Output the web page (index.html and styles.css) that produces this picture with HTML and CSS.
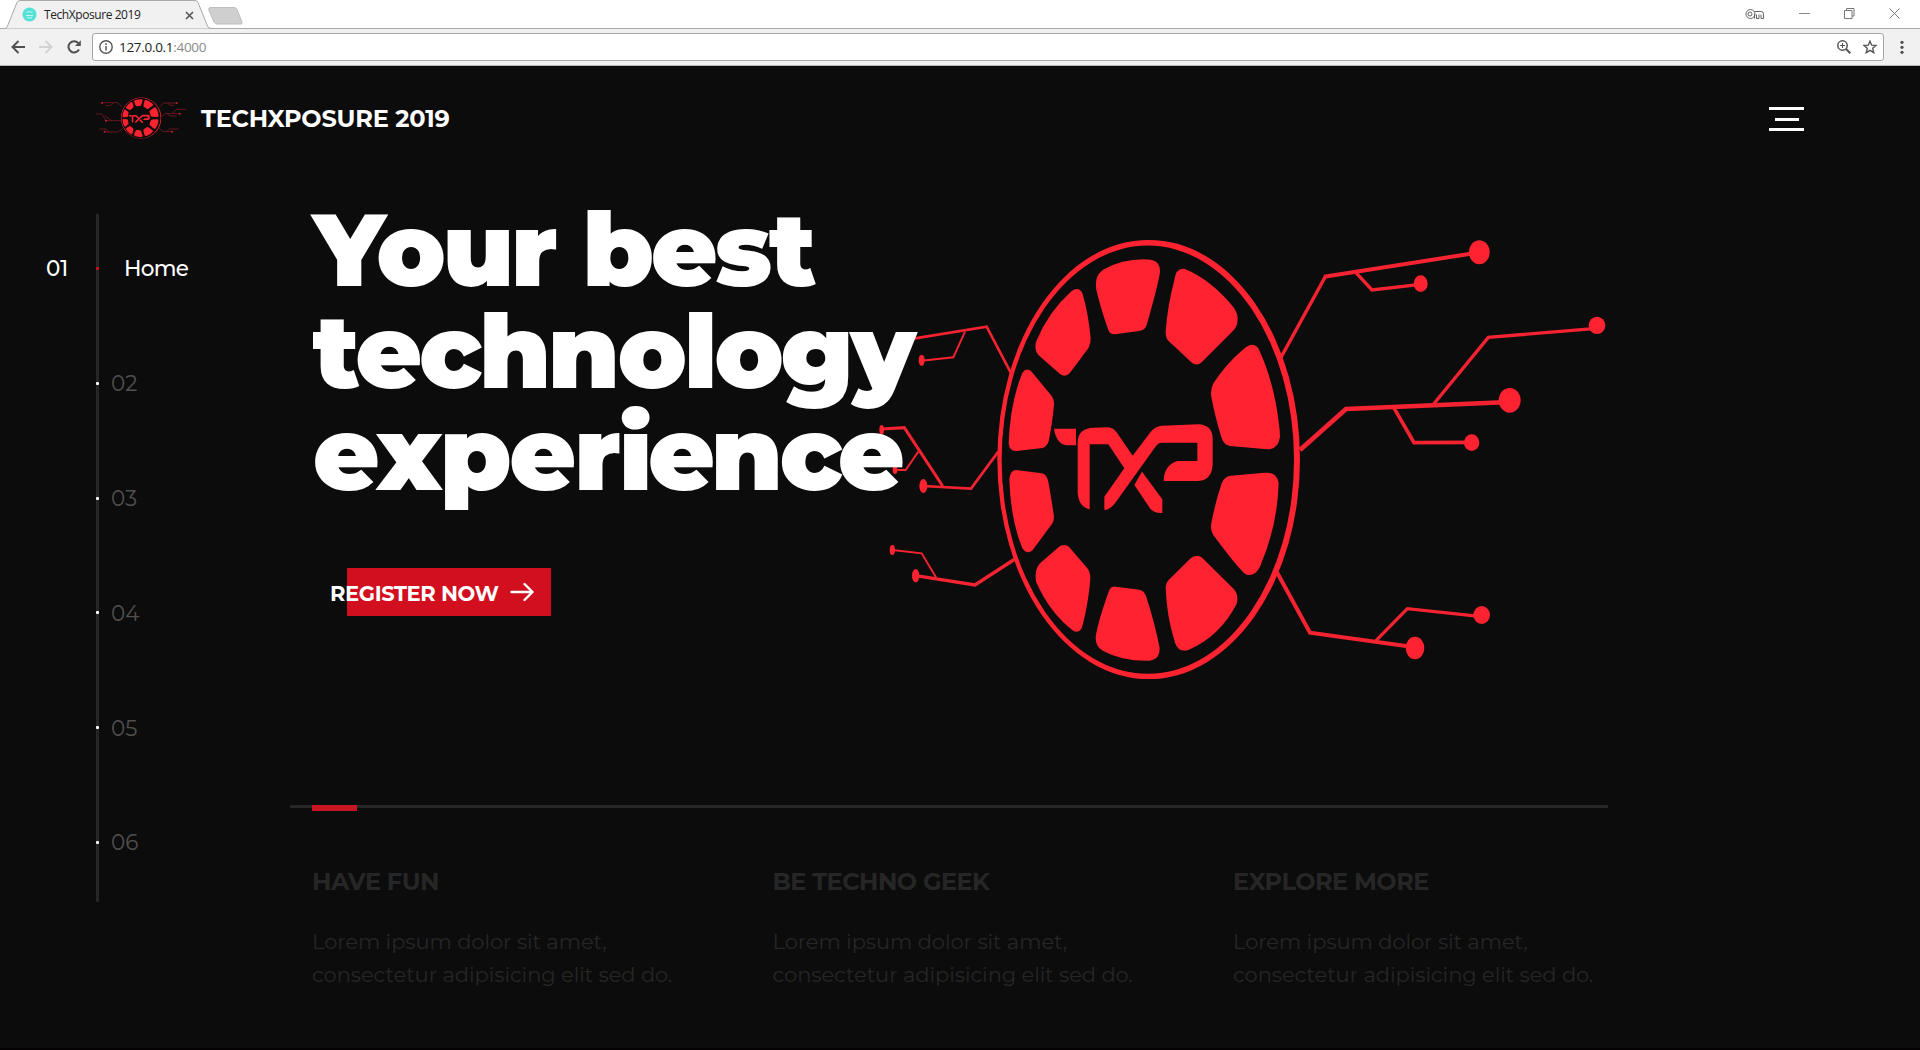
FILE: index.html
```html
<!DOCTYPE html>
<html lang="en">
<head>
<meta charset="utf-8">
<title>TechXposure 2019</title>
<link rel="stylesheet" href="styles.css">
</head>
<body>
<div class="tabstrip">
  <div class="tab">
    <svg class="tab-shape" width="208" height="29" viewBox="0 0 208 29"><path d="M0 28.500H1Q2.500 28.500 3.500 26L13 2.500Q14 .5 16 .5H191Q193 .5 194 2.500L203.500 26Q204.500 28.500 207 28.500" fill="#f1f1f1" stroke="#a9a9a9"/></svg>
    <svg class="favicon" width="15" height="15" viewBox="0 0 15 15"><circle cx="7.500" cy="7.500" r="7" fill="#55e0d8"/><path d="M4 8.500H11M4.500 5.500q3-2 6 0M5 10.500q2.500 1.200 5 0" fill="none" stroke="#c5f7f3"/></svg>
    <span class="tab-title">TechXposure 2019</span>
    <svg class="tab-close" width="9" height="9" viewBox="0 0 9 9"><path d="M1 1l7 7M8 1L1 8" stroke="#555" stroke-width="1.600"/></svg>
  </div>
  <svg class="new-tab" width="35" height="18" viewBox="0 0 35 18"><path d="M2 .5H26Q28 .5 29 2.500L34 15Q34.500 17 33 17H9Q7 17 6 15L.8 3Q.3 .8 2 .5Z" fill="#cfcfcf" stroke="#bdbdbd"/></svg>
  <div class="window-controls">
    <svg width="20" height="12" viewBox="0 0 20 12" fill="none" stroke="#666"><circle cx="5.500" cy="6" r="4.500"/><circle cx="5" cy="6" r="2"/><path d="M9.500 3.500H16Q18.500 3.500 18.500 6V10.500H16V6.500M14 6.500V10.500H11.500V6.500M9.500 10.500V6"/></svg>
    <svg width="11" height="11" viewBox="0 0 11 11"><path d="M0 5.500H11" stroke="#888"/></svg>
    <svg width="11" height="11" viewBox="0 0 11 11" fill="none" stroke="#777"><path d="M.5 2.500H8V10.500H.5ZM2.500 2.500V.5H10V8H8"/></svg>
    <svg width="11" height="11" viewBox="0 0 11 11"><path d="M.5 .5l10 10M10.500 .5l-10 10" stroke="#777"/></svg>
  </div>
</div>
<div class="toolbar">
  <svg width="14" height="14" viewBox="0 0 14 14" fill="none" stroke="#505050" stroke-width="2"><path d="M14 7H1.500M7.500 1L1.500 7l6 6"/></svg>
  <svg width="14" height="14" viewBox="0 0 14 14" fill="none" stroke="#d2d2d2" stroke-width="2"><path d="M0 7H12.500M6.500 1l6 6-6 6"/></svg>
  <svg width="14" height="14" viewBox="0 0 14 14"><path d="M12 9.500A5.600 5.600 0 1 1 11.300 3.200" fill="none" stroke="#505050" stroke-width="2"/><path d="M13.800 .3V6H8Z" fill="#505050"/></svg>
  <div class="omnibox">
    <svg width="14" height="14" viewBox="0 0 14 14"><circle cx="7" cy="7" r="6.200" fill="none" stroke="#555" stroke-width="1.400"/><path d="M7 6V10.500M7 3.300V4.900" stroke="#555" stroke-width="1.500"/></svg>
    <span class="url">127.0.0.1<span class="port">:4000</span></span>
    <svg class="zoom-icon" width="14" height="14" viewBox="0 0 14 14" fill="none" stroke="#555"><circle cx="5.500" cy="5.500" r="4.700" stroke-width="1.500"/><path d="M9 9l4.300 4.300" stroke-width="2"/><path d="M3 5.500H8M5.500 3V8"/></svg>
    <svg width="14" height="14" viewBox="0 0 14 14"><path d="M7 1.200L8.700 5.200 13 5.500 9.700 8.300 10.800 12.700 7 10.300 3.200 12.700 4.300 8.300 1 5.500 5.300 5.200Z" fill="none" stroke="#555" stroke-width="1.400"/></svg>
  </div>
  <svg width="4" height="14" viewBox="0 0 4 14" fill="#505050"><circle cx="2" cy="2.300" r="1.600"/><circle cx="2" cy="7.300" r="1.600"/><circle cx="2" cy="12.300" r="1.600"/></svg>
</div>

<div class="page">
  <header class="site-header">
    <svg class="logo" width="92" height="44" viewBox="48 50 276 132">
      <g fill="none" stroke="#8d1c27" stroke-width="2"><path d="M125 82L114 70H66M100 70L92 79H76M123 124H78L66 104H48M95 124L74 109M128 148L112 158H74M88 158L78 149H58M240 82L250 71H290M262 71L270 78H282M243 112L256 103H300M276 103L290 90H320M262 103L270 110H290M236 146L250 157H276M260 157L268 149H296"/></g>
      <g fill="#c02331"><circle cx="66" cy="71" r="3"/><circle cx="78" cy="124" r="3"/><circle cx="74" cy="157" r="3"/><circle cx="290" cy="71" r="3"/><circle cx="299" cy="103" r="3"/><circle cx="276" cy="157" r="3"/></g>
      <svg x="123" y="54" width="121" height="124" viewBox="52 60 908 1317" preserveAspectRatio="none"><use href="#wheel"/></svg>
    </svg>
    <span class="brand">TECHXPOSURE 2019</span>
    <div class="menu"><i></i><i class="short"></i><i></i></div>
  </header>

  <div class="columns">
    <nav class="side-nav">
      <ul>
        <li class="active"><span class="num">01</span><i class="dot"></i><span class="label">Home</span></li>
        <li><span class="num"></span><i class="dot"></i><span class="label">02</span></li>
        <li><span class="num"></span><i class="dot"></i><span class="label">03</span></li>
        <li><span class="num"></span><i class="dot"></i><span class="label">04</span></li>
        <li><span class="num"></span><i class="dot"></i><span class="label">05</span></li>
        <li><span class="num"></span><i class="dot"></i><span class="label">06</span></li>
      </ul>
    </nav>

    <main>
      <section class="hero">
        <svg class="hero-art" width="735" height="480" viewBox="-315 0 2205 1440" fill="#ff2230">
          <g id="wheel" fill="#ff2230">
            <path fill-rule="evenodd" d="M52 718.500a454 658.500 0 1 0 908 0a454 658.500 0 1 0-908 0ZM65 719a438.500 642 0 1 1 877 0a438.500 642 0 1 1-877 0Z"/>
            <path d="M349 180Q352 160 372 148Q425 118 490 118L512 119Q541 122 540 155Q538 180 501 312Q497 330 477 333L405 343Q390 344 385 330Q365 275 349 210Q346 195 349 180Z"/>
            <path d="M583 180Q588 142 615 147Q690 178 755 255Q778 280 772 310Q770 322 755 337L665 427Q650 440 634 427L565 362Q556 352 557 335Q562 260 583 180Z"/>
            <path d="M700 490Q740 430 790 388Q818 362 835 385Q885 490 899 630L900 650Q895 688 862 688L750 678Q732 675 725 655Q705 590 694 530Q690 512 700 490Z"/>
            <path d="M725 790Q732 770 752 767L855 758Q893 756 896 790Q892 920 840 1040Q825 1070 800 1064Q785 1060 700 945Q690 930 694 910Q705 850 725 790Z"/>
            <path d="M557 1105Q556 1092 566 1080L632 1015Q648 1002 665 1012L762 1108Q776 1123 771 1150Q720 1250 625 1290Q595 1298 585 1268Q560 1190 557 1105Z"/>
            <path d="M388 1110Q394 1098 408 1100L478 1109Q492 1112 498 1128Q525 1210 539 1285Q540 1318 510 1322Q430 1325 368 1292Q345 1278 347 1250Q355 1200 388 1110Z"/>
            <path d="M180 1030L240 978Q256 970 268 982L322 1045Q332 1058 331 1078Q325 1150 308 1215Q303 1240 282 1234Q210 1180 168 1085Q162 1050 180 1030Z"/>
            <path d="M88 780Q90 750 108 750L185 760Q200 762 205 785Q215 840 222 890Q222 905 212 917L158 990Q142 1006 127 985Q92 900 88 780Z"/>
            <path d="M127 458Q140 440 155 455L215 528Q224 540 222 555Q218 600 207 660Q202 680 188 684L110 693Q88 695 86 670Q90 550 127 458Z"/>
            <path d="M168 365Q205 275 275 213Q298 198 308 222Q325 280 332 355Q333 370 325 385L270 458Q256 474 240 462L175 405Q162 390 168 365Z"/>
            <path d="M222 626H288V676H260Q228 670 222 626Z"/>
            <path d="M293 665Q295 625 340 623L385 622Q402 624 412 640L458 707L510 638Q524 619 545 617L655 613Q697 615 698 655V735Q695 780 655 783H551Q552 735 592 723H652V668H545Q535 668 528 678L405 850Q390 870 373 870V830L433 745L385 673H329V868Q297 862 293 820Z"/>
            <path d="M486 755L547 838V879Q520 880 510 865L463 795Z"/>
          </g>
          <g fill="none" stroke="#f52331" stroke-width="10">
            <path d="M903 412L1036 170"/><path d="M1032 170L1500 97" stroke-width="12"/>
            <path d="M1127 157L1176 210L1322 193"/>
            <path d="M1361 552L1525 352L1850 325"/>
            <path d="M960 690L1098 567L1590 546" stroke-width="14"/>
            <path d="M1241 562L1302 668L1475 667" stroke-width="11"/>
            <path d="M890 1055L990 1238L1305 1282" stroke-width="12"/>
            <path d="M1188 1262L1282 1166L1505 1190"/>
            <path d="M95 463L20 320L-195 355L-240 362" stroke-width="8"/>
            <path d="M-45 335L-80 412L-175 422" stroke-width="6"/>
            <path d="M55 695L-27 806L-170 798" stroke-width="8"/>
            <path d="M-112 798L-227 623L-295 627" stroke-width="9"/>
            <path d="M-185 695L-223 750L-255 750" stroke-width="6"/>
            <path d="M105 1017L-15 1095L-193 1067"/>
            <path d="M-132 1072L-175 1000L-263 990" stroke-width="6"/>
          </g>
          <ellipse cx="1498" cy="97" rx="31" ry="36"/><ellipse cx="1322" cy="191" rx="21" ry="25"/>
          <ellipse cx="1851" cy="316" rx="25" ry="26"/><ellipse cx="1589" cy="541" rx="33" ry="37"/>
          <ellipse cx="1475" cy="668" rx="23" ry="25"/><ellipse cx="1305" cy="1284" rx="28" ry="34"/>
          <ellipse cx="1505" cy="1185" rx="25" ry="27"/><ellipse cx="-175" cy="421" rx="9" ry="17"/>
          <ellipse cx="-170" cy="798" rx="12" ry="21"/><ellipse cx="-295" cy="629" rx="7" ry="14"/>
          <ellipse cx="-255" cy="750" rx="7" ry="12"/><ellipse cx="-193" cy="1067" rx="11" ry="20"/>
          <ellipse cx="-263" cy="990" rx="8" ry="15"/>
        </svg>
        <h1>Your best<br>technology<br><span class="loose">exper</span><span class="snug">ience</span></h1>
        <a class="register"><span>REGISTER NOW</span>
          <svg width="24" height="20" viewBox="0 0 24 20" fill="none" stroke="#fff" stroke-width="2.400" stroke-linecap="round" stroke-linejoin="round"><path d="M1.500 10H22.500M14.500 2L22.500 10l-8 8"/></svg>
        </a>
      </section>
      <section class="features">
        <div class="feature"><h3>HAVE FUN</h3><p>Lorem ipsum dolor sit amet,<br>consectetur adipisicing elit sed do.</p></div>
        <div class="feature"><h3>BE TECHNO GEEK</h3><p>Lorem ipsum dolor sit amet,<br>consectetur adipisicing elit sed do.</p></div>
        <div class="feature"><h3>EXPLORE MORE</h3><p>Lorem ipsum dolor sit amet,<br>consectetur adipisicing elit sed do.</p></div>
      </section>
    </main>
  </div>
</div>
</body>
</html>
```
FILE: styles.css
```css
* { box-sizing: border-box; }
body {
  margin: 0;
  height: 1050px;
  display: flex;
  flex-direction: column;
  overflow: hidden;
  background: #0c0c0c;
  font-family: Montserrat, Inter, sans-serif;
}
svg { display: block; flex: none; }

/* Browser frame */
.tabstrip {
  height: 29px;
  display: flex;
  background: #fff;
  border-bottom: 1px solid #a9a9a9;
  padding-left: 4px;
  font-family: "Segoe UI", "Open Sans", sans-serif;
}
.tab {
  position: relative;
  width: 208px;
  height: 29px;
  display: flex;
  align-items: flex-start;
}
.tab-shape { position: absolute; left: 0; top: 0; }
.favicon { position: relative; margin: 7px 0 0 18px; }
.tab-title {
  position: relative;
  margin: 6px 0 0 7px;
  width: 141px;
  font-size: 12px;
  line-height: 18px;
  letter-spacing: -0.43px;
  color: #222;
}
.tab-close { position: relative; margin-top: 11px; }
.new-tab { margin: 7px 0 0 -4px; }
.window-controls {
  margin-left: auto;
  padding-right: 20px;
  height: 27px;
  display: flex;
  align-items: center;
  gap: 34px;
}
.toolbar {
  height: 37px;
  flex: none;
  display: flex;
  align-items: center;
  gap: 14px;
  padding: 0 16px 1px 11px;
  background: #f1f1f1;
  border-bottom: 1px solid #b5b5b5;
}
.omnibox {
  flex: 1;
  height: 28px;
  margin: 0 2px 0 -3px;
  padding: 0 6px;
  display: flex;
  align-items: center;
  background: #fff;
  border: 1px solid #a6a6a6;
  border-radius: 3px;
}
.url {
  margin-left: 6px;
  font-family: "Segoe UI", "Open Sans", sans-serif;
  font-size: 13.500px;
  letter-spacing: -0.3px;
  color: #222;
}
.port { color: #8a8a8a; }
.zoom-icon { margin: 0 12px 0 auto; }

/* Page */
.page { flex: 1; border-bottom: 2px solid #050204; }
.site-header {
  height: 106px;
  display: flex;
  align-items: center;
  padding: 0 116px 0 96px;
}
.logo { margin-top: -2px; }
.brand {
  margin: -2px 0 0 13px;
  font-size: 24px;
  font-weight: 700;
  letter-spacing: -0.180px;
  color: #fff;
}
.menu {
  margin-left: auto;
  width: 35px;
  height: 24px;
  display: flex;
  flex-direction: column;
  justify-content: space-between;
}
.menu i { height: 3px; background: #fff; }
.menu .short { margin: 0 5px 0 6px; }

.columns { display: grid; grid-template-columns: 290px 1318px; align-items: start; }

.side-nav {
  margin-top: 42px;
  height: 688px;
  padding-top: 42.500px;
  background: linear-gradient(#262626, #262626) 96px 0 / 3px 100% no-repeat;
}
.side-nav ul {
  margin: 0;
  padding: 0;
  list-style: none;
  display: flex;
  flex-direction: column;
  gap: 90.800px;
}
.side-nav li {
  height: 24px;
  display: flex;
  align-items: center;
  font-size: 21.500px;
  color: #505050;
}
.num { width: 96px; padding-left: 46px; font-weight: 500; }
.dot { width: 3px; height: 3px; background: #fff; border-radius: 1px; }
.label { margin-left: 12px; }
.side-nav .active { color: #fff; }
.active .num, .active .label { margin-top: -1px; }
.active .dot { background: #d20f1f; }
.active .label { margin-left: 25px; font-weight: 500; letter-spacing: -0.700px; }

.hero {
  position: relative;
  height: 633px;
  padding: 27px 0 0 21px;
}
.hero-art { position: absolute; left: 585px; top: 48px; }
h1 {
  position: relative;
  margin: 0 0 0 2px;
  width: 640px;
  font-size: 102px;
  font-weight: 900;
  line-height: 102px;
  letter-spacing: -2.850px;
  color: #fff;
}
.loose { letter-spacing: -1.900px; }
.snug { letter-spacing: -3.900px; }
.register {
  width: 204px;
  height: 48px;
  margin: 63px 0 0 36px;
  padding-top: 3px;
  display: flex;
  align-items: center;
  background: #d20f1f;
  color: #fff;
  font-size: 21px;
  font-weight: 700;
  letter-spacing: -0.360px;
  white-space: nowrap;
}
.register span { margin-left: -17px; }
.register svg { margin: -3px 0 0 11px; }

.features {
  display: grid;
  grid-template-columns: repeat(3, 460.500px);
  padding: 60px 0 0 22px;
  border-top: 3px solid #262626;
  position: relative;
}
.features::before {
  content: "";
  position: absolute;
  left: 22px;
  top: -3px;
  width: 45px;
  height: 6px;
  background: #c81523;
}
h3 {
  margin: 0 0 28.500px;
  font-size: 24px;
  line-height: 28px;
  letter-spacing: -0.500px;
  color: #262626;
}
p {
  margin: 0;
  font-size: 21px;
  line-height: 33px;
  letter-spacing: -0.070px;
  color: #262626;
}
```
